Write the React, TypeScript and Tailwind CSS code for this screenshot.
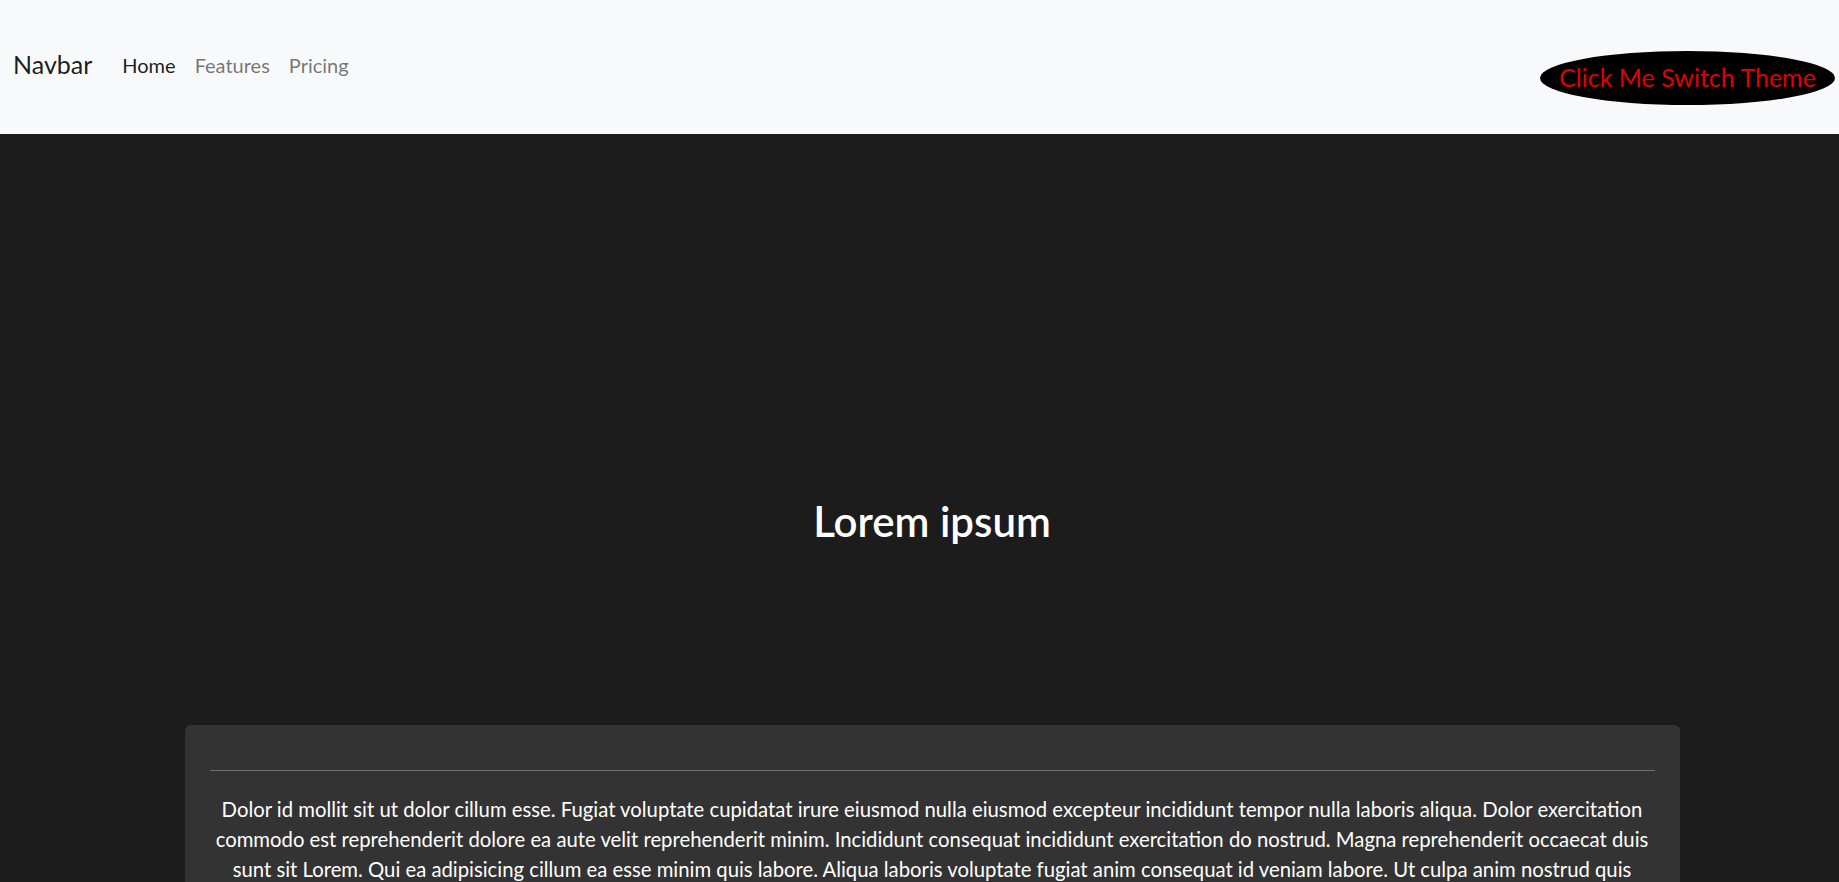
import React from "react";

const body =
  "Dolor id mollit sit ut dolor cillum esse. Fugiat voluptate cupidatat irure eiusmod nulla eiusmod excepteur incididunt tempor nulla laboris aliqua. Dolor exercitation commodo est reprehenderit dolore ea aute velit reprehenderit minim. Incididunt consequat incididunt exercitation do nostrud. Magna reprehenderit occaecat duis sunt sit Lorem. Qui ea adipisicing cillum ea esse minim quis labore. Aliqua laboris voluptate fugiat anim consequat id veniam labore. Ut culpa anim nostrud quis ullamco ea officia. Excepteur ex ipsum ullamco laborum aliquip consequat non et occaecat deserunt aute.";

function Navbar() {
  return (
    <nav className="flex h-[134px] items-center justify-between bg-[#f8f9fa] pl-[13px] pr-[4px]">
      <div className="mb-[4px] flex items-center">
        <a href="#" className="mr-[30px] text-[25px] text-black/90">
          Navbar
        </a>
        <ul className="flex items-center gap-[19px] text-[20px]">
          <li>
            <a href="#" className="text-black/90">Home</a>
          </li>
          <li>
            <a href="#" className="text-black/55">Features</a>
          </li>
          <li>
            <a href="#" className="text-black/55">Pricing</a>
          </li>
        </ul>
      </div>
      <button className="mt-[22px] flex h-[54px] w-[295px] items-center justify-center rounded-[50%] bg-black text-[25px] text-[#e00000]">
        Click Me Switch Theme
      </button>
    </nav>
  );
}

export default function App() {
  return (
    <div className="min-h-screen bg-[#1c1c1c] font-['Lato',sans-serif]">
      <Navbar />
      <main className="pl-[25px]">
        <h1 className="pt-[363px] text-center text-[42px] leading-[48px] font-semibold text-white">
          Lorem ipsum
        </h1>
        <div className="mx-auto mt-[180px] w-[1495px] rounded-md bg-[#333333] px-[25px] pt-[45px] pb-[40px]">
          <hr className="border-t border-[#6e6e6e]" />
          <p className="mt-[23px] text-center text-[20.3px] leading-[30px] text-white">{body}</p>
        </div>
      </main>
    </div>
  );
}
